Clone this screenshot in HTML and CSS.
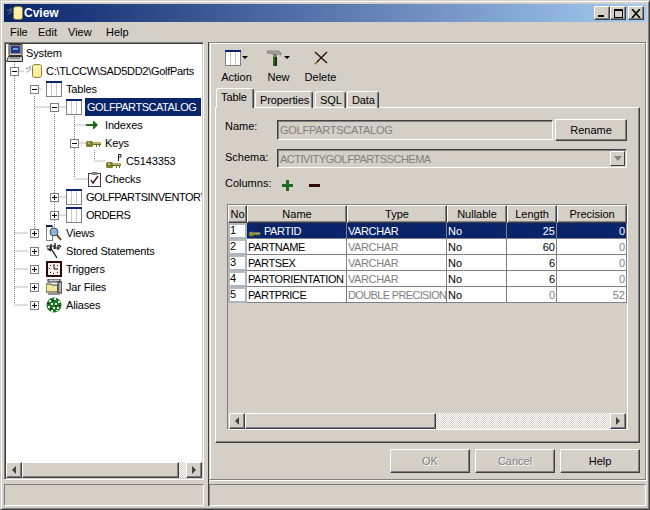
FILE: index.html
```html
<!DOCTYPE html>
<html lang="en">
<head>
<meta charset="utf-8">
<title>Cview</title>
<link rel="stylesheet" href="styles.css">
</head>
<body>
<svg class="defs" width="0" height="0" aria-hidden="true">
  <symbol id="i-table" viewBox="0 0 16 16">
    <rect x="0" y="0" width="16" height="16" fill="#808080"/>
    <rect x="1" y="1" width="14" height="14" fill="#fff"/>
    <rect x="0" y="0" width="16" height="2" fill="#0a246a"/>
    <rect x="5" y="2" width="1" height="13" fill="#c8c8c8"/>
    <rect x="10" y="2" width="1" height="13" fill="#c8c8c8"/>
  </symbol>
  <symbol id="i-db" viewBox="0 0 16 16">
    <path d="M0 5.500h2l2-2M4 3.500v2M1 9.500l3-3h1" fill="none" stroke="#808080"/>
    <path d="M6.500 3.500C6.500 2 8 1.500 11 1.500s4.500.5 4.500 2v9c0 1.500-1.500 2-4.500 2s-4.500-.5-4.500-2z" fill="#ffeea0" stroke="#7f7f30"/>
    <path d="M7 4.500h8" stroke="#fffbe0"/>
  </symbol>
  <symbol id="i-key" viewBox="0 0 16 9">
    <rect x="0" y="1" width="7" height="6" rx="1.500" fill="#7d7d2a"/>
    <rect x="7" y="2" width="8" height="3" fill="#b8b070"/>
    <path d="M7 4h8v1H7zM10 5h1v2h-1zM13 5h1v2h-1z" fill="#6a6a20"/>
    <rect x="2" y="2" width="2" height="2" fill="#b8b870"/>
  </symbol>
  <symbol id="i-pkey" viewBox="0 0 16 16">
    <rect x="0" y="9" width="7" height="6" rx="1.500" fill="#7d7d2a"/>
    <rect x="7" y="10" width="8" height="3" fill="#b8b070"/>
    <path d="M7 12h8v1H7zM10 13h1v2h-1zM13 13h1v2h-1z" fill="#6a6a20"/>
    <rect x="2" y="10" width="2" height="2" fill="#b8b870"/>
    <path d="M12.500 8V1.500h2.500v2.500h-2.500" fill="none" stroke="#202020"/>
  </symbol>
  <symbol id="i-arrow" viewBox="0 0 12 8">
    <path d="M0 3h7V0h1l4 4-4 4H7V5H0z" fill="#1e6b1e"/>
  </symbol>
  <symbol id="i-check" viewBox="0 0 13 15">
    <rect x=".5" y="1.500" width="12" height="13" fill="#fff" stroke="#404040"/>
    <rect x="4" y="0" width="5" height="3" fill="#808080"/>
    <path d="M3 8l2 3 5-7" fill="none" stroke="#401010" stroke-width="1.300"/>
  </symbol>
  <symbol id="i-views" viewBox="0 0 16 16">
    <rect x=".5" y=".5" width="6" height="15" fill="#fff" stroke="#808080"/>
    <rect x="0" y="0" width="6" height="2" fill="#0a246a"/>
    <circle cx="8" cy="7" r="4" fill="#8db4e0" stroke="#505050"/>
    <path d="M11 10l4 5" stroke="#604020" stroke-width="2"/>
  </symbol>
  <symbol id="i-stored" viewBox="0 0 16 16">
    <path d="M0 3h10M1 6h5M7 5h7M5 1v6M9 0v6M12 2v5M4 4l7 11M2 6l3 2M13 2l2 2" fill="none" stroke="#101010" stroke-width="1.200"/>
    <path d="M1 4l2 2M6 3l2 2" stroke="#808080"/>
  </symbol>
  <symbol id="i-trig" viewBox="0 0 16 16">
    <rect x="1" y="1" width="14" height="14" fill="#f4f0e8" stroke="#300808" stroke-width="2"/>
    <path d="M8 3v5h4" fill="none" stroke="#300808"/>
    <path d="M4 4h1v1H4zM11 4h1v1h-1zM4 11h1v1H4zM11 11h1v1h-1zM3 7h1v1H3zM7 12h1v1H7z" fill="#300808"/>
  </symbol>
  <symbol id="i-jar" viewBox="0 0 16 16">
    <rect x="2" y="0" width="12" height="3" fill="#c8c8c8" stroke="#303030"/>
    <path d="M0 5h5l1 1h6v7H0z" fill="#f0e8a0" stroke="#404030"/>
    <rect x="12" y="3" width="4" height="11" fill="#b0b0b0" stroke="#202020"/>
    <rect x="2" y="14" width="12" height="2" fill="#909090"/>
  </symbol>
  <symbol id="i-alias" viewBox="0 0 16 16">
    <circle cx="8" cy="8" r="7.500" fill="#1e7a2a"/>
    <path d="M3 3h2v2H3zM8 1h2v2H8zM12 4h2v2h-2zM5 6h2v2H5zM9 6h2v2H9zM2 9h2v2H2zM7 10h2v2H7zM11 10h2v2h-2zM5 13h2v2H5zM10 13h2v1h-2z" fill="#e8f4e0"/>
    <path d="M1 6h2v1H1zM6 3h2v1H6zM13 8h2v1h-2zM4 11h2v1H4zM9 8h2v1H9z" fill="#101810"/>
  </symbol>
  <symbol id="i-system" viewBox="0 0 18 18">
    <path d="M3 .5h13v11H3z" fill="#d4d0c8" stroke="#303030"/>
    <rect x="5" y="2" width="9" height="7" fill="#1c3c9c" stroke="#404040"/>
    <rect x="7" y="4" width="5" height="2" fill="#70a0e0"/>
    <path d="M.5 17.500l2-5h14v5z" fill="#d4d0c8" stroke="#303030"/>
    <path d="M4 14h10" stroke="#606060"/>
  </symbol>
</svg>

<div class="window">
  <header class="titlebar">
    <svg class="title-icon"><use href="#i-db"/></svg>
    <span class="title-text">Cview</span>
    <div class="win-btns">
      <span class="win-btn win-min"><i></i></span>
      <span class="win-btn win-max"><i></i></span>
      <span class="win-btn win-close">
        <svg width="10" height="9" viewBox="0 0 10 9"><path d="M1 0l8 9M9 0l-8 9" stroke="#000" stroke-width="1.700"/></svg>
      </span>
    </div>
  </header>

  <nav class="menubar">
    <span class="menu-item m-file">File</span>
    <span class="menu-item m-edit">Edit</span>
    <span class="menu-item m-view">View</span>
    <span class="menu-item">Help</span>
  </nav>

  <div class="workspace">
    <aside class="tree-pane">
      <div class="tree">
        <svg class="tree-lines" width="196" height="300">
          <path d="M8.500 16v244M28.500 52v136M48.500 70v118M68.500 70v64M88.500 106v10M8.500 27h10M28.500 45h8M28.500 63h16M48.500 63h16M68.500 81h14M68.500 99h14M88.500 117h12M68.500 135h14M48.500 153h14M48.500 171h14M8.500 189h14M8.500 207h14M8.500 225h14M8.500 243h14M8.500 261h14" fill="none" stroke="#808080" stroke-dasharray="1 1"/>
        </svg>
        <div class="node lv0"><svg class="ico ico-sys"><use href="#i-system"/></svg><span class="lbl">System</span></div>
        <div class="node lv1"><span class="exp minus"></span><svg class="ico"><use href="#i-db"/></svg><span class="lbl path">C:\TLCCW\SAD5DD2\GolfParts</span></div>
        <div class="node lv2"><span class="exp minus"></span><svg class="ico"><use href="#i-table"/></svg><span class="lbl">Tables</span></div>
        <div class="node lv3"><span class="exp minus"></span><svg class="ico"><use href="#i-table"/></svg><span class="lbl sel caps">GOLFPARTSCATALOG</span></div>
        <div class="node lv4"><span class="exp none"></span><svg class="ico ico-arrow"><use href="#i-arrow"/></svg><span class="lbl">Indexes</span></div>
        <div class="node lv4"><span class="exp minus"></span><svg class="ico ico-key"><use href="#i-key"/></svg><span class="lbl">Keys</span></div>
        <div class="node lv5"><span class="exp none"></span><svg class="ico"><use href="#i-pkey"/></svg><span class="lbl">C5143353</span></div>
        <div class="node lv4"><span class="exp none"></span><svg class="ico ico-check"><use href="#i-check"/></svg><span class="lbl">Checks</span></div>
        <div class="node lv3"><span class="exp plus"></span><svg class="ico"><use href="#i-table"/></svg><span class="lbl caps">GOLFPARTSINVENTORY</span></div>
        <div class="node lv3"><span class="exp plus"></span><svg class="ico"><use href="#i-table"/></svg><span class="lbl caps">ORDERS</span></div>
        <div class="node lv2"><span class="exp plus"></span><svg class="ico"><use href="#i-views"/></svg><span class="lbl">Views</span></div>
        <div class="node lv2"><span class="exp plus"></span><svg class="ico"><use href="#i-stored"/></svg><span class="lbl">Stored Statements</span></div>
        <div class="node lv2"><span class="exp plus"></span><svg class="ico"><use href="#i-trig"/></svg><span class="lbl">Triggers</span></div>
        <div class="node lv2"><span class="exp plus"></span><svg class="ico"><use href="#i-jar"/></svg><span class="lbl">Jar Files</span></div>
        <div class="node lv2"><span class="exp plus"></span><svg class="ico"><use href="#i-alias"/></svg><span class="lbl">Aliases</span></div>
      </div>
      <div class="hscroll tree-scroll">
        <span class="sb-btn"><span class="tri-l"></span></span>
        <span class="sb-thumb"></span>
        <span class="sb-track"></span>
        <span class="sb-btn"><span class="tri-r"></span></span>
      </div>
    </aside>

    <div class="splitter"></div>

    <main class="detail">
      <div class="toolbar">
        <div class="tool">
          <span class="tool-ico">
            <svg class="tool-svg" width="16" height="16"><use href="#i-table"/></svg><span class="drop"></span>
          </span>
          <span class="tool-lbl">Action</span>
        </div>
        <div class="tool">
          <span class="tool-ico">
            <svg class="tool-svg" width="16" height="16" viewBox="0 0 16 16">
              <path d="M0 1h12l2 2v2l-2-1H9L0 3z" fill="#a8a8a8" stroke="#606060" stroke-width=".6"/>
              <rect x="6" y="4" width="4" height="3" fill="#808080"/>
              <rect x="6" y="7" width="4" height="9" fill="#2c6a20"/>
              <rect x="8" y="7" width="2" height="9" fill="#202818"/>
            </svg><span class="drop"></span>
          </span>
          <span class="tool-lbl">New</span>
        </div>
        <div class="tool">
          <span class="tool-ico">
            <svg width="14" height="14" viewBox="0 0 14 14"><path d="M1 1l12 11" stroke="#301010" stroke-width="1.400"/><path d="M13 1L1 13" stroke="#301010" stroke-width="1.400"/><path d="M1 13l2-2" stroke="#a09040" stroke-width="1.800"/></svg>
          </span>
          <span class="tool-lbl">Delete</span>
        </div>
      </div>

      <div class="tabs">
        <span class="tab active">Table</span>
        <span class="tab">Properties</span>
        <span class="tab">SQL</span>
        <span class="tab">Data</span>
      </div>

      <section class="tab-panel">
        <div class="form">
          <label class="form-lbl lbl-name">Name:</label>
          <div class="field">GOLFPARTSCATALOG</div>
          <button class="btn rename">Rename</button>
          <label class="form-lbl lbl-schema">Schema:</label>
          <div class="field combo"><span class="schema-val">ACTIVITYGOLFPARTSSCHEMA</span><span class="combo-btn"><span class="tri-d"></span></span></div>
        </div>
        <div class="columns-row">
          <span class="form-lbl col-lbl">Columns:</span>
          <svg class="col-add" width="11" height="11" viewBox="0 0 11 11"><path d="M4 0h3v4h4v3H7v4H4V7H0V4h4z" fill="#1e6b1e"/></svg>
          <svg class="col-del" width="11" height="3" viewBox="0 0 11 3"><rect width="11" height="3" fill="#300808"/></svg>
        </div>

        <div class="grid-pane">
          <div class="grid-view">
            <table class="grid">
              <colgroup>
                <col class="c-no"><col class="c-name"><col class="c-type"><col class="c-null"><col class="c-len"><col class="c-prec">
              </colgroup>
              <thead>
                <tr><th>No</th><th>Name</th><th>Type</th><th>Nullable</th><th>Length</th><th>Precision</th></tr>
              </thead>
              <tbody>
                <tr class="row-sel">
                  <td class="no">1</td>
                  <td class="cap"><svg class="key-cell" width="14" height="12" viewBox="0 0 16 16"><use href="#i-pkey"/></svg><span class="partid">PARTID</span></td>
                  <td class="cap">VARCHAR</td><td>No</td><td class="num">25</td><td class="num">0</td>
                </tr>
                <tr><td class="no">2</td><td class="cap">PARTNAME</td><td class="cap dim">VARCHAR</td><td>No</td><td class="num">60</td><td class="num dim">0</td></tr>
                <tr><td class="no">3</td><td class="cap">PARTSEX</td><td class="cap dim">VARCHAR</td><td>No</td><td class="num">6</td><td class="num dim">0</td></tr>
                <tr><td class="no">4</td><td class="cap">PARTORIENTATION</td><td class="cap dim">VARCHAR</td><td>No</td><td class="num">6</td><td class="num dim">0</td></tr>
                <tr><td class="no">5</td><td class="cap">PARTPRICE</td><td class="cap tight dim">DOUBLE PRECISION</td><td>No</td><td class="num dim">0</td><td class="num dim">52</td></tr>
              </tbody>
            </table>
          </div>
          <div class="hscroll grid-scroll">
            <span class="sb-btn"><span class="tri-l"></span></span>
            <span class="sb-thumb"></span>
            <span class="sb-track"></span>
            <span class="sb-btn"><span class="tri-r"></span></span>
          </div>
        </div>
      </section>

      <div class="actions">
        <button class="btn action disabled">OK</button>
        <button class="btn action disabled">Cancel</button>
        <button class="btn action">Help</button>
      </div>
    </main>

    <div class="status status-l"></div>
    <div class="status status-r"></div>
  </div>
</div>
</body>
</html>
```

FILE: styles.css
```css
* { box-sizing: border-box; }
html, body { margin: 0; padding: 0; }
body {
  width: 650px; height: 510px; overflow: hidden;
  font: 11px/13px "Liberation Sans", Arial, sans-serif;
  color: #000; background: #d4d0c8;
}
.defs { position: absolute; }
svg { display: block; }

.window {
  width: 650px; height: 510px;
  display: flex; flex-direction: column;
  border: 1px solid; border-color: #d4d0c8 #404040 #404040 #d4d0c8;
  box-shadow: inset 1px 1px 0 #fff, inset -1px -1px 0 #808080;
  background: #d4d0c8;
  padding: 3px;
}

.titlebar {
  height: 18px; flex: none;
  display: flex; align-items: center;
  background: linear-gradient(90deg, #0a246a, #a6caf0);
  color: #fff;
}
.title-icon { width: 16px; height: 16px; margin-left: 3px; }
.title-text { margin-left: 1px; font-size: 12px; font-weight: bold; }
.win-btns { margin-left: auto; display: flex; padding-right: 2px; }
.win-btn {
  width: 16px; height: 14px;
  display: flex; align-items: center; justify-content: center;
  background: #d4d0c8;
  border: 1px solid; border-color: #fff #404040 #404040 #fff;
  box-shadow: inset -1px -1px 0 #808080;
}
.win-min i { width: 6px; height: 2px; background: #000; margin: 6px 2px 0 0; }
.win-max i { width: 9px; height: 9px; border: 1px solid #000; border-top-width: 2px; }
.win-close { margin-left: 2px; }

.menubar { height: 20px; flex: none; display: flex; align-items: center; padding-left: 6px; }
.m-file { width: 28px; }
.m-edit { width: 30px; }
.m-view { width: 38px; }

.workspace {
  flex: 1; min-height: 0;
  display: grid;
  grid-template-columns: 200px 5px 1fr;
  grid-template-rows: 438px 22px;
  row-gap: 4px;
}

/* left tree */
.tree-pane {
  display: flex; flex-direction: column;
  border: 1px solid; border-color: #808080 #fff #fff #808080;
  box-shadow: inset 1px 1px 0 #404040, inset -1px -1px 0 #d4d0c8;
  padding: 1px;
}
.tree { position: relative; flex: 1; background: #fff; overflow: hidden; }
.tree-lines { position: absolute; left: 0; top: 0; }
.node { position: relative; height: 18px; display: flex; align-items: center; }
.lv0 { padding-left: 0; }
.lv1 { padding-left: 4px; }
.lv2 { padding-left: 24px; }
.lv3 { padding-left: 44px; }
.lv4 { padding-left: 64px; }
.lv5 { padding-left: 84px; }
.exp {
  width: 9px; height: 9px; flex: none; margin-right: 7px;
  position: relative; background: #fff; border: 1px solid #808080;
}
.exp.none { background: none; border: 0; }
.exp.minus::before, .exp.plus::before {
  content: ""; position: absolute; left: 1px; top: 3px; width: 5px; height: 1px; background: #000;
}
.exp.plus::after {
  content: ""; position: absolute; left: 3px; top: 1px; width: 1px; height: 5px; background: #000;
}
.ico { width: 16px; height: 16px; flex: none; }
.ico-sys { width: 18px; height: 18px; margin-right: -2px; }
.ico-arrow { height: 8px; width: 12px; margin-right: 3px; }
.ico-key { height: 9px; margin-top: 3px; margin-right: -1px; }
.ico-check { height: 15px; margin-left: 2px; width: 13px; }
.lbl { margin-left: 3px; padding: 0 1px; white-space: nowrap; height: 16px; line-height: 16px; letter-spacing: -.15px; }
.lbl.path { letter-spacing: -.3px; }
.lbl.caps { letter-spacing: -.45px; }
.lbl.sel { background: #0a246a; color: #fff; padding: 0 5px 0 2px; height: 18px; line-height: 18px; }

/* scrollbars */
.hscroll { height: 16px; flex: none; display: flex; }
.sb-btn {
  width: 16px; flex: none;
  display: flex; align-items: center; justify-content: center;
  background: #d4d0c8;
  border: 1px solid; border-color: #fff #404040 #404040 #fff;
  box-shadow: inset -1px -1px 0 #808080;
}
.sb-thumb {
  background: #d4d0c8;
  border: 1px solid; border-color: #fff #404040 #404040 #fff;
  box-shadow: inset -1px -1px 0 #808080;
}
.sb-track { flex: 1; background: conic-gradient(#fff 25%, #d4d0c8 0 50%, #fff 0 75%, #d4d0c8 0) 0 0 / 2px 2px; }
.tree-scroll .sb-thumb { width: 157px; }
.grid-scroll .sb-thumb { width: 191px; }
.tri-l { border: 4px solid transparent; border-left: 0; border-right: 4px solid #404040; }
.tri-r { border: 4px solid transparent; border-right: 0; border-left: 4px solid #404040; }
.tri-d { border: 4px solid transparent; border-bottom: 0; border-top: 5px solid #808080; }

.splitter { grid-row: 1 / 3; grid-column: 2; border-right: 1px solid #404040; }
.status { border: 1px solid; border-color: #808080 #fff #fff #808080; }
.status-l { grid-column: 1; grid-row: 2; }
.status-r { grid-column: 3; grid-row: 2; }

/* right */
.detail {
  grid-column: 3; grid-row: 1;
  display: flex; flex-direction: column;
  border: 1px solid #808080;
  border-left-color: #d4d0c8;
  box-shadow: inset 1px 1px 0 #fff, 1px 1px 0 #fff;
  padding: 1px 4px 0 5px;
}
.toolbar { height: 45px; flex: none; display: flex; }
.tool { width: 42px; display: flex; flex-direction: column; align-items: center; padding-top: 4px; padding-left: 1px; }
.tool-ico { height: 20px; display: flex; align-items: center; }
.drop { border: 3px solid transparent; border-bottom: 0; border-top: 3px solid #000; margin-left: 1px; margin-top: -2px; }
.tool-lbl { margin-top: 3px; }

.tabs { height: 19px; flex: none; display: flex; align-items: flex-end; padding-left: 1px; position: relative; z-index: 1; margin-bottom: -1px; }
.tab {
  height: 17px; line-height: 17px; padding: 0 4px; margin-right: 1px;
  border: 1px solid; border-color: #fff #404040 transparent #fff;
  border-bottom: 0;
  border-radius: 3px 3px 0 0;
  box-shadow: inset -1px 0 0 #808080;
  letter-spacing: -.1px;
}
.tab:nth-child(2) { width: 58px; }
.tab:nth-child(3) { width: 31px; margin-left: 1px; }
.tab:nth-child(4) { width: 32px; }
.tab.active { height: 20px; width: 38px; line-height: 17px; background: #d4d0c8; position: relative; }

.tab-panel {
  width: 425px; height: 336px; flex: none;
  display: flex; flex-direction: column;
  border: 1px solid; border-color: #fff #404040 #404040 #fff;
  box-shadow: inset -1px -1px 0 #808080;
  padding: 11px 12px 12px 9px;
}
.form {
  display: grid;
  grid-template-columns: 52px 278px 72px;
  grid-template-rows: 22px 19px;
  row-gap: 8px;
  align-items: center;
}
.lbl-name { margin-top: -8px; }
.lbl-schema { margin-top: -3px; }
.field {
  height: 20px; width: 276px;
  border: 1px solid; border-color: #404040 #fff #fff #404040;
  box-shadow: inset 1px 1px 0 #808080;
  color: #808080; line-height: 18px; padding-left: 2px; white-space: nowrap; overflow: hidden;
  letter-spacing: -.25px;
}
.combo { grid-column: 2 / 4; width: 350px; height: 19px; position: relative; line-height: 19px; }
.schema-val { letter-spacing: -.5px; }
.combo-btn {
  position: absolute; right: 1px; top: 1px; width: 15px; height: 15px;
  display: flex; align-items: center; justify-content: center;
  border: 1px solid; border-color: #fff #404040 #404040 #fff;
  background: #d4d0c8;
}
.btn {
  font: inherit; color: #000; padding: 0; background: #d4d0c8;
  border: 1px solid; border-color: #fff #404040 #404040 #fff;
  box-shadow: inset -1px -1px 0 #808080;
}
.rename { width: 72px; height: 22px; }
.btn.disabled { color: #808080; text-shadow: 1px 1px 0 #fff; }

.columns-row { height: 18px; margin-top: 6px; display: flex; align-items: center; }
.col-lbl { width: 57px; }
.col-add { margin-top: 4px; }
.col-del { margin: 4px 0 0 16px; }

.grid-pane {
  margin: 12px -1px 0 2px; flex: 1;
  display: flex; flex-direction: column;
  border: 1px solid; border-color: #808080 #fff #fff #808080;
}
.grid-view { flex: 1; min-height: 0; overflow: hidden; }
.grid { border-collapse: separate; border-spacing: 0; table-layout: fixed; width: 399px; font-size: 11px; }
.c-no { width: 19px; } .c-name { width: 100px; } .c-type { width: 100px; }
.c-null { width: 60px; } .c-len { width: 50px; } .c-prec { width: 70px; }
.grid th {
  height: 18px; padding: 0; font-weight: normal; overflow: hidden;
  border: 1px solid; border-color: #fff #404040 #404040 #fff;
  box-shadow: inset -1px -1px 0 #808080;
  background: #d4d0c8;
}
.grid td {
  height: 16px; padding: 1px 1px 0; background: #fff; white-space: nowrap; overflow: hidden;
  border-right: 1px solid #808080; border-bottom: 1px solid #808080; line-height: 14px;
}
.grid td.cap { letter-spacing: -.4px; }
.grid td.tight { letter-spacing: -.65px; }
.grid td.no { padding: 0 0 1px 2px; box-shadow: inset 1px 1px 0 1px #b8b8b8, inset -2px -2px 0 #a9b4c6; border: 0; line-height: 13px; }
.grid td.num { text-align: right; }
.grid td.dim { color: #808080; }
.row-sel td { background: #0a246a; color: #fff; }
.row-sel td.no { background: #fff; color: #000; }
.key-cell { display: inline-block; vertical-align: -2px; margin-right: 1px; }
.partid { margin-left: 1px; }
.grid-scroll { margin: 0 1px; }

.actions { margin-top: 6px; display: flex; justify-content: flex-end; gap: 5px; padding-right: 1px; }
.action { width: 80px; height: 24px; }
```
